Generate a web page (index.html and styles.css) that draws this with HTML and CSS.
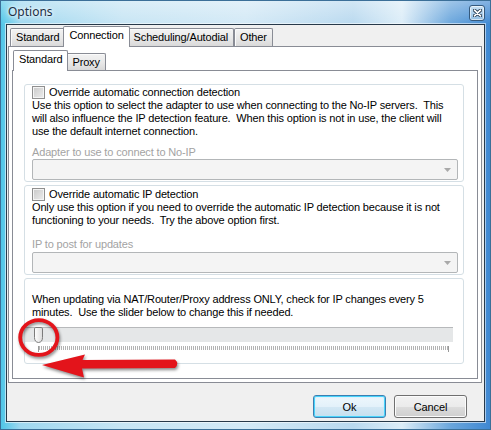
FILE: index.html
```html
<!DOCTYPE html>
<html>
<head>
<title>Options</title>
<link rel="stylesheet" href="styles.css">
</head>
<body>
<div class="window">
  <div class="titlebar">
    <span class="title">Options</span>
    <span class="close">
      <svg width="9" height="8" viewBox="0 0 9 8">
        <path d="M1.5 1.2l6 5.6M7.5 1.2l-6 5.6" stroke="#24384d" stroke-width="3.4" stroke-linecap="round"/>
        <path d="M1.5 1.2l6 5.6M7.5 1.2l-6 5.6" stroke="#fff" stroke-width="1.7" stroke-linecap="round"/>
      </svg>
    </span>
  </div>

  <div class="client">
    <div class="tabs">
      <div class="tab">Standard</div>
      <div class="tab active">Connection</div>
      <div class="tab">Scheduling/Autodial</div>
      <div class="tab">Other</div>
    </div>

    <div class="panel">
      <div class="tabs sub">
        <div class="tab active">Standard</div>
        <div class="tab">Proxy</div>
      </div>

      <div class="subpanel">
        <div class="group group-adapter">
          <div class="check-row"><span class="check"></span>Override automatic connection detection</div>
          <p class="desc">Use this option to select the adapter to use when connecting to the No-IP servers.&nbsp; This<br>will also influence the IP detection feature.&nbsp; When this option is not in use, the client will<br>use the default internet connection.</p>
          <div class="field-label">Adapter to use to connect to No-IP</div>
          <div class="select"><svg width="7" height="4" viewBox="0 0 7 4"><path d="M0 0h7L3.5 4z" fill="#a9a9a9"/></svg></div>
        </div>

        <div class="group group-ip">
          <div class="check-row"><span class="check"></span>Override automatic IP detection</div>
          <p class="desc">Only use this option if you need to override the automatic IP detection because it is not<br>functioning to your needs.&nbsp; Try the above option first.</p>
          <div class="field-label">IP to post for updates</div>
          <div class="select"><svg width="7" height="4" viewBox="0 0 7 4"><path d="M0 0h7L3.5 4z" fill="#a9a9a9"/></svg></div>
        </div>

        <div class="group group-slider">
          <p class="desc">When updating via NAT/Router/Proxy address ONLY, check for IP changes every 5<br>minutes.&nbsp; Use the slider below to change this if needed.</p>
          <div class="track">
            <svg class="thumb" width="9" height="16" viewBox="0 0 9 16">
              <defs>
                <linearGradient id="thumbfill" x1="0" y1="0" x2="1" y2="0">
                  <stop offset="0" stop-color="#ffffff"/>
                  <stop offset="1" stop-color="#dcdcdc"/>
                </linearGradient>
              </defs>
              <path d="M0.5 1.8q0-1.3 1.3-1.3h5.4q1.3 0 1.3 1.3v8.7q0 4.6-4 5q-4-0.4-4-5z" fill="url(#thumbfill)" stroke="#7b7b7b"/>
            </svg>
          </div>
          <div class="ticks"></div>
        </div>
      </div>
    </div>

    <div class="buttons">
      <button class="btn default">Ok</button>
      <button class="btn">Cancel</button>
    </div>
  </div>

  <svg class="annotation" width="491" height="430" viewBox="0 0 491 430">
    <g class="mark">
      <ellipse cx="38.8" cy="337.5" rx="18.6" ry="17.4" fill="none" stroke="#e3141b" stroke-width="3.8"/>
      <path d="M42 365L85 354.5L82.5 360L175 359.5Q179.5 363.5 175 368L82 368.5L84 377.5Z" fill="#e3141b"/>
    </g>
  </svg>
</div>
</body>
</html>
```

FILE: styles.css
```css
body {
  margin: 0;
  font-family: "Liberation Sans", Arial, sans-serif;
  font-size: 11px;
  letter-spacing: -0.15px;
  color: #000;
}

.window {
  position: relative;
  width: 491px;
  height: 430px;
  box-sizing: border-box;
  padding: 0 5px 7px 5px;
  background:
    linear-gradient(rgba(255,255,255,0.35), rgba(255,255,255,0) 24px),
    linear-gradient(to right, #4fc6e8 0%, #9fd8f0 4%, #c7e5f4 25%, #d3e9f6 50%, #b9d9ef 72%, #dcedf8 82%, #6aa6dc 92%, #3f88d2 100%);
  border: 1px solid #3b6f98;
}

.titlebar {
  height: 23px;
  display: flex;
  justify-content: space-between;
  align-items: flex-start;
  box-sizing: border-box;
  padding: 3px 0 0 2px;
}

.title {
  font-family: "Noto Sans", sans-serif;
  font-size: 12px;
  line-height: 16px;
  letter-spacing: 0;
  color: #1b2f45;
  text-shadow: 0 0 6px #fff, 0 0 3px #fff;
}

.close {
  width: 16px;
  height: 16px;
  margin-top: 1px;
  box-sizing: border-box;
  border: 1px solid #35597c;
  border-radius: 3px;
  background: linear-gradient(#c9e2f4, #94bfe3);
  box-shadow: inset 0 0 0 1px rgba(255,255,255,0.6);
  display: flex;
  align-items: center;
  justify-content: center;
}

.client {
  height: 398px;
  box-sizing: border-box;
  border: 1px solid #27394a;
  box-shadow: 0 0 0 1px rgba(255,255,255,0.55);
  background: #f0f0f0;
  padding: 1px 2px 0 1px;
  display: flex;
  flex-direction: column;
}

.tabs {
  display: flex;
  align-items: flex-end;
  height: 20px;
  padding-left: 2px;
}

.tab {
  height: 17px;
  line-height: 17px;
  padding: 0 5px;
  border: 1px solid #898c95;
  border-bottom: 0;
  border-radius: 2px 2px 0 0;
  background: linear-gradient(#f3f3f3, #e8e8e8 55%, #d9d9d9);
  box-shadow: inset 1px 1px 0 #fbfbfb;
  white-space: nowrap;
}

.tab.active {
  position: relative;
  z-index: 1;
  height: 20px;
  margin: 0 -2px -1px -2px;
  background: #fff;
  box-shadow: none;
}

.panel {
  height: 337px;
  box-sizing: border-box;
  border: 1px solid #898c95;
  background: #fff;
  padding: 3px;
}

.tabs.sub {
  padding-left: 3px;
}

.tabs.sub .tab {
  height: 16px;
  line-height: 17px;
}

.tabs.sub .tab.active {
  height: 20px;
}

.subpanel {
  height: 309px;
  box-sizing: border-box;
  border: 1px solid #898c95;
  background: #fff;
  padding: 13px 13px 0 11px;
  display: flex;
  flex-direction: column;
  gap: 3px;
}

.group {
  box-sizing: border-box;
  border: 1px solid #d5dfe5;
  border-radius: 3px;
  padding: 0 5px 1px 7px;
}

.group-adapter { height: 98px; }

.group-ip {
  height: 90px;
  padding-top: 1px;
}

.group-slider {
  height: 86px;
  padding-top: 14px;
}

.check-row {
  height: 14px;
  display: flex;
  align-items: center;
  line-height: 13px;
}

.check {
  width: 13px;
  height: 13px;
  box-sizing: border-box;
  margin-right: 4px;
  border: 1px solid #8f8f8f;
  background: linear-gradient(135deg, #c9c9c9, #ededed);
  box-shadow: inset 0 0 0 1px #f4f4f4;
}

.desc {
  margin: 0;
  line-height: 13px;
  white-space: nowrap;
}

.field-label {
  margin-top: 8px;
  line-height: 13px;
  color: #a3a3a3;
}

.group-ip .field-label {
  margin-top: 11px;
  margin-bottom: 1px;
}

.select {
  height: 21px;
  box-sizing: border-box;
  border: 1px solid #b3b6b8;
  border-radius: 2px;
  background: #f4f4f4;
  display: flex;
  justify-content: flex-end;
  align-items: center;
  padding-right: 6px;
}

.track {
  width: 428px;
  height: 15px;
  box-sizing: border-box;
  margin: 8px 0 0 -7px;
  border-top: 1px solid #b7b9bb;
  background: #e5e7e8;
  padding-left: 9px;
  display: flex;
  align-items: flex-start;
}

.thumb {
  margin-top: -1px;
  flex: none;
}

.ticks {
  width: 411px;
  height: 6px;
  box-sizing: border-box;
  margin: 4px 0 0 6px;
  border-left: 1px solid #9a9a9a;
  border-right: 1px solid #9a9a9a;
  background: repeating-linear-gradient(to right, #b3b3b3 0 1px, transparent 1px 2px) no-repeat;
  background-size: 100% 4px;
}

.buttons {
  display: flex;
  justify-content: flex-end;
  gap: 8px;
  padding: 12px 15px 0 0;
}

.btn {
  width: 73px;
  height: 23px;
  box-sizing: border-box;
  border: 1px solid #707070;
  border-radius: 3px;
  background: linear-gradient(#f2f2f2 0%, #ebebeb 50%, #dddddd 50%, #cfcfcf 100%);
  box-shadow: inset 0 0 0 1px #fcfcfc;
  font-family: "Liberation Sans", Arial, sans-serif;
  font-size: 11px;
  letter-spacing: -0.15px;
  color: #000;
  padding: 0;
}

.btn.default {
  border-color: #3c7fb1;
  box-shadow: inset 0 0 0 1px #48d3fb, inset 0 0 2px 1px #bfeafc;
  background: linear-gradient(#eef7fc 0%, #e3f1fa 50%, #d3e8f5 50%, #c5dfee 100%);
}

.annotation {
  position: absolute;
  left: -1px;
  top: -1px;
  pointer-events: none;
}

.mark {
  filter: drop-shadow(1px 2px 1.5px rgba(0,0,0,0.45));
}
```
